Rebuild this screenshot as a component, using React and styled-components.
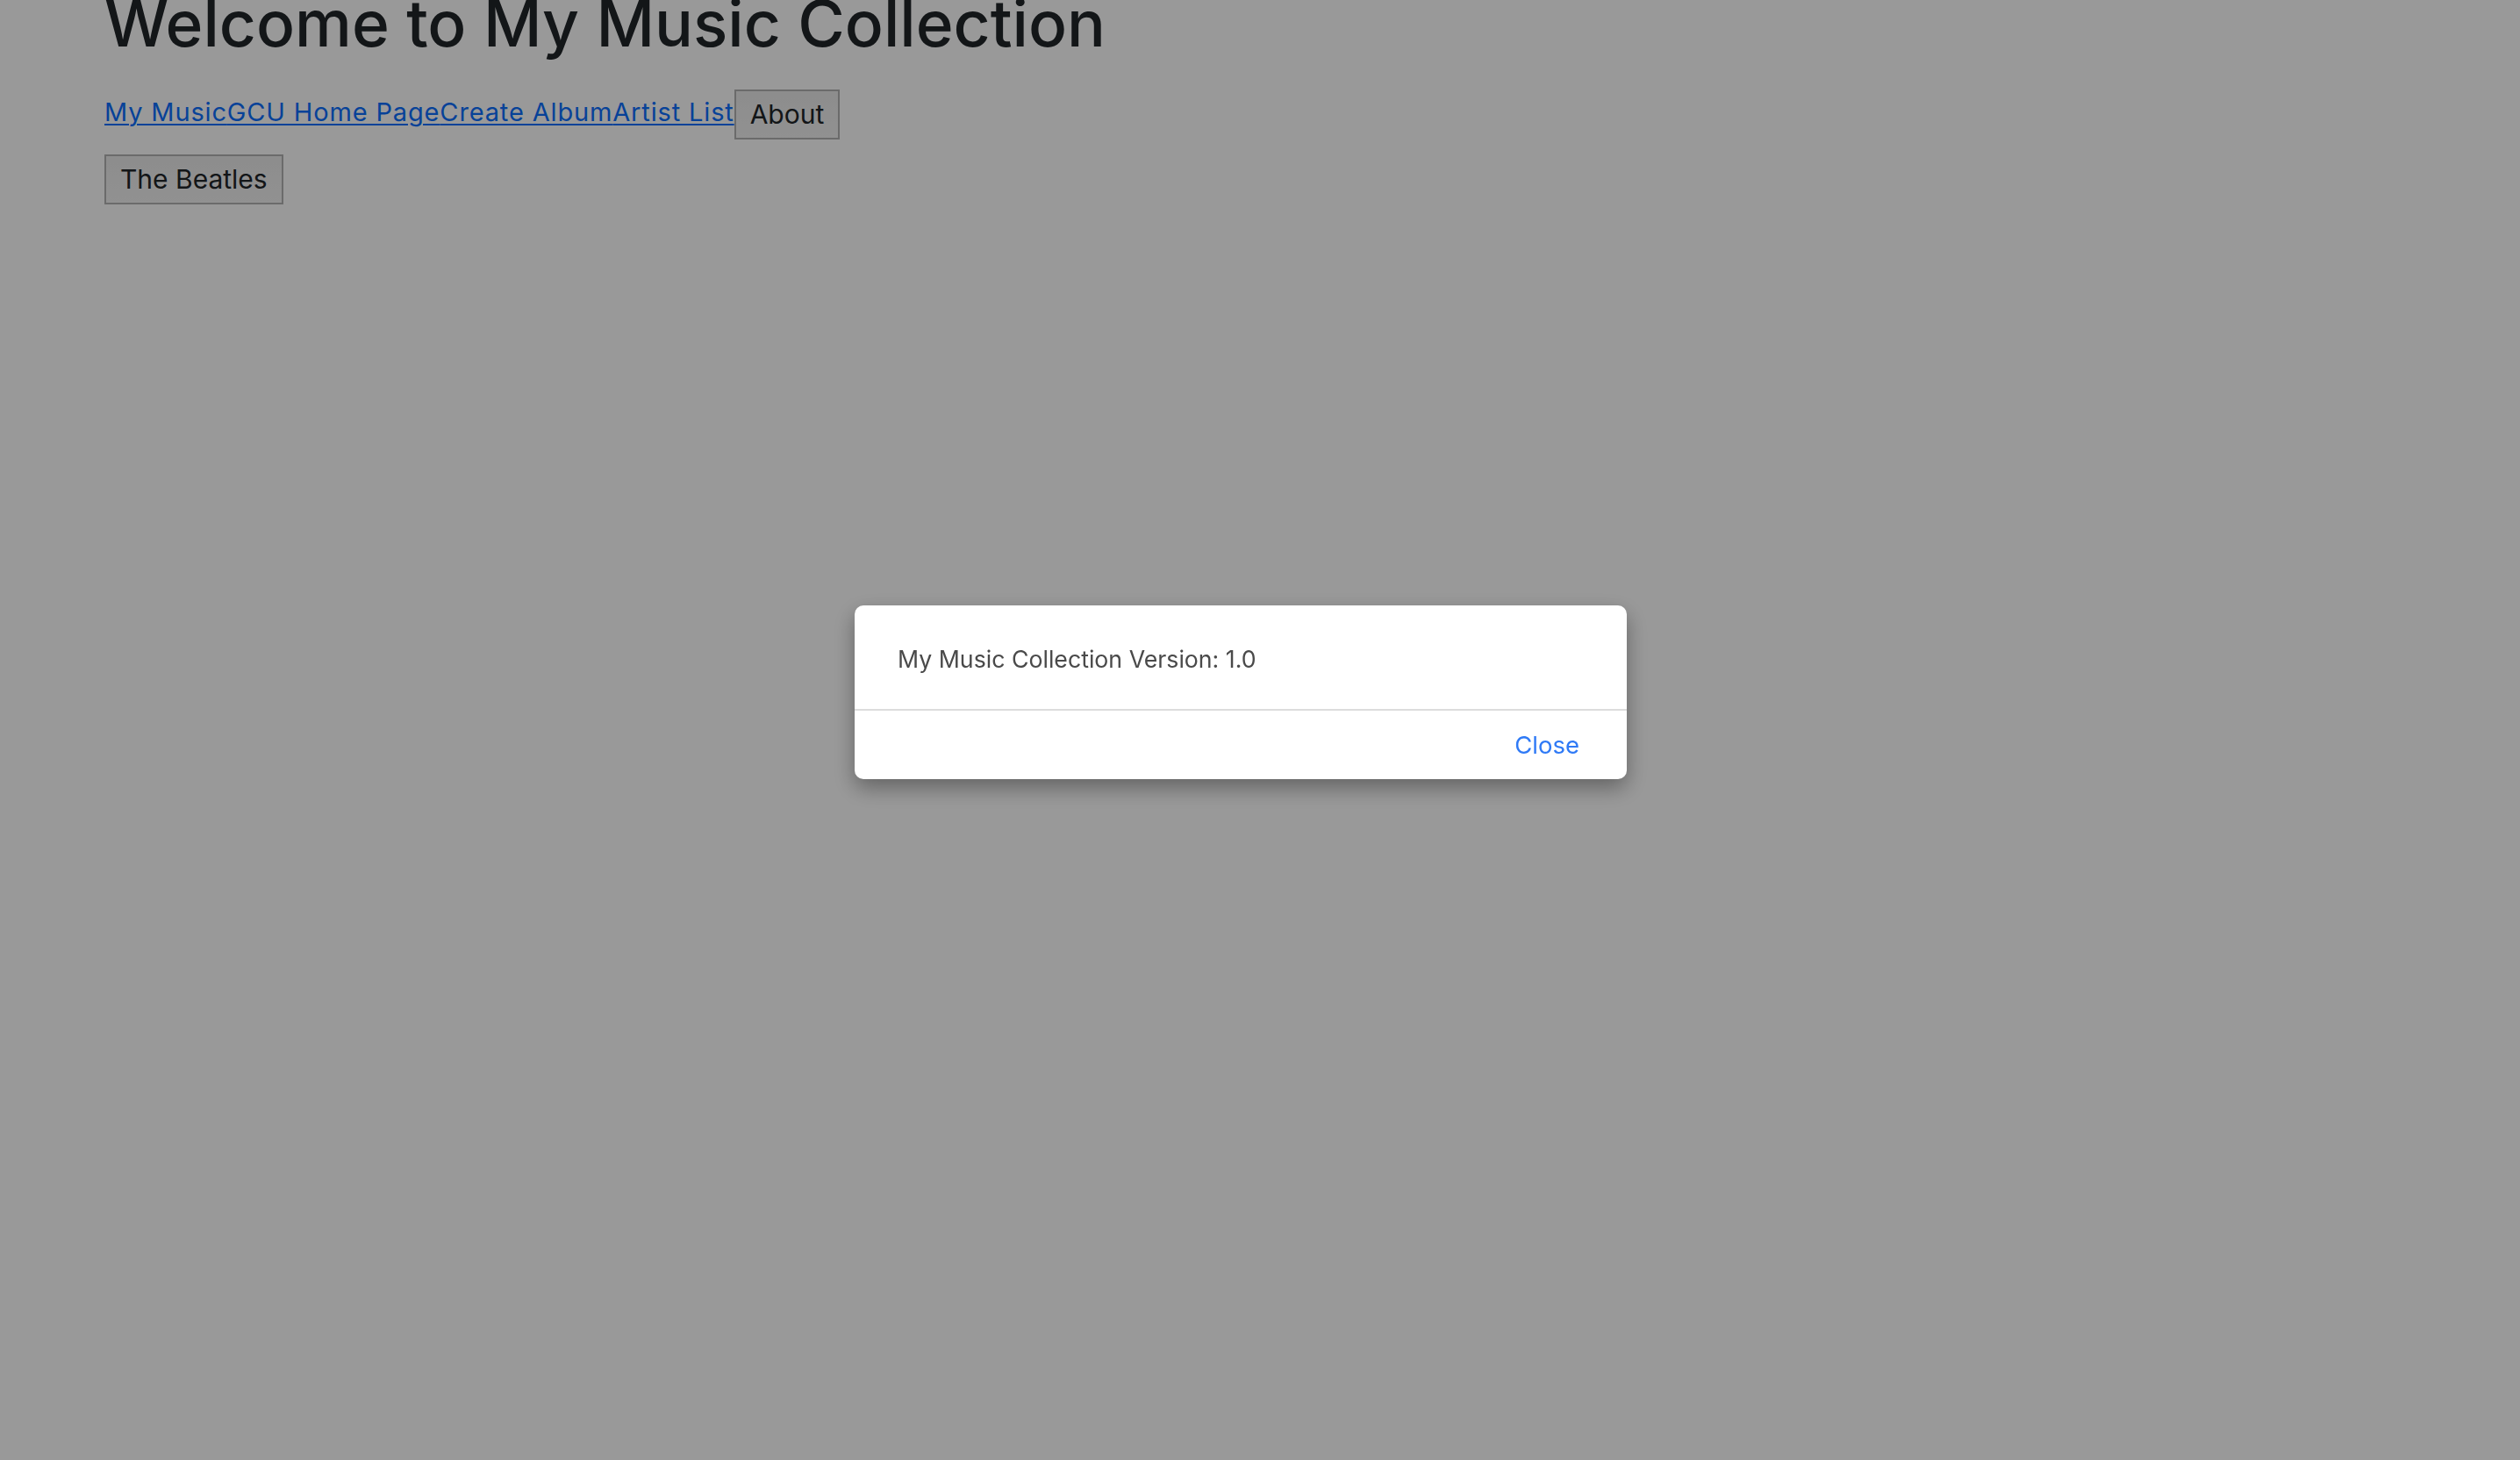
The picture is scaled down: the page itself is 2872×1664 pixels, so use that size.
import React from "react";
import styled, { createGlobalStyle } from "styled-components";

const GlobalStyle = createGlobalStyle`
  html, body {
    margin: 0;
    padding: 0;
    background: #ffffff;
    font-family: Inter, "Noto Sans", "Liberation Sans", sans-serif;
  }
`;

const links = ["My Music", "GCU Home Page", "Create Album", "Artist List"];

export default function App() {
  return (
    <>
      <GlobalStyle />
      <Page>
        <Title>Welcome to My Music Collection</Title>
        <Nav>
          <Links>
            {links.map((label) => (
              <NavLink key={label} href="#">
                {label}
              </NavLink>
            ))}
          </Links>
          <PlainButton>About</PlainButton>
        </Nav>
        <ArtistRow>
          <PlainButton>The Beatles</PlainButton>
        </ArtistRow>
      </Page>
      <Backdrop>
        <Modal>
          <ModalBody>My Music Collection Version: 1.0</ModalBody>
          <ModalFooter>
            <CloseButton>Close</CloseButton>
          </ModalFooter>
        </Modal>
      </Backdrop>
    </>
  );
}

const Page = styled.div`
  padding: 0 119px;
  min-height: 1664px;
  box-sizing: border-box;
`;

const Title = styled.h1`
  margin: -17px 0 0;
  font-size: 73px;
  font-weight: 500;
  line-height: 1.2;
  color: #212529;
`;

const Nav = styled.nav`
  display: flex;
  align-items: flex-start;
  margin-top: 31px;
`;

const Links = styled.div`
  display: flex;
  margin-top: 8px;
`;

const NavLink = styled.a`
  font-size: 29px;
  line-height: 35px;
  letter-spacing: 0.85px;
  color: #0d6efd;
  text-decoration: underline;
  text-decoration-thickness: 2px;
  text-underline-offset: 3px;
`;

const PlainButton = styled.button`
  height: 57px;
  padding: 0 16px;
  border: 2px solid #b2b2b2;
  background: linear-gradient(#ebebeb, #f2f2f2);
  font-family: inherit;
  font-size: 30px;
  color: #212529;
  border-radius: 0;
`;

const ArtistRow = styled.div`
  display: flex;
  margin-top: 17px;
`;

const Backdrop = styled.div`
  position: fixed;
  inset: 0;
  background: rgba(0, 0, 0, 0.4);
  display: flex;
  flex-direction: column;
  align-items: center;
  padding: 690px 44px 0 0;
  box-sizing: border-box;
`;

const Modal = styled.div`
  width: 880px;
  background: #ffffff;
  border-radius: 10px;
  box-shadow: 0 10px 24px rgba(0, 0, 0, 0.35);
  overflow: hidden;
`;

const ModalBody = styled.div`
  height: 120px;
  box-sizing: border-box;
  padding: 3px 0 0 49px;
  display: flex;
  align-items: center;
  font-size: 26.7px;
  color: #4a4a4a;
  border-bottom: 2px solid #dcdcdc;
`;

const ModalFooter = styled.div`
  height: 78px;
  display: flex;
  align-items: center;
  justify-content: flex-end;
  padding-right: 54px;
`;

const CloseButton = styled.button`
  border: none;
  background: none;
  padding: 0;
  font-family: inherit;
  font-size: 27.5px;
  color: #2f7af6;
  cursor: pointer;
`;
